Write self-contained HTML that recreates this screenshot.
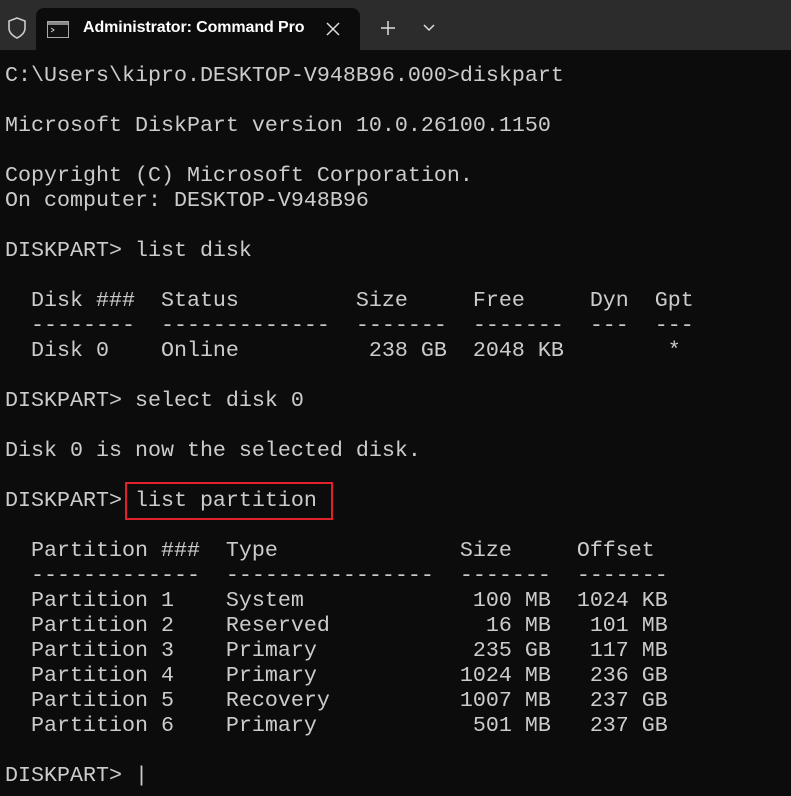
<!DOCTYPE html>
<html><head><meta charset="utf-8"><style>
html,body{margin:0;padding:0;width:791px;height:796px;overflow:hidden;background:#0c0c0c}
.bar{position:absolute;left:0;top:0;width:791px;height:50px;background:#2c2c2c}
.tab{position:absolute;left:36px;top:8px;width:324px;height:44px;background:#0c0c0c;border-radius:8px 8px 0 0}
.tt{position:absolute;left:83px;top:19px;font:16px "Liberation Sans",sans-serif;color:#fff;font-weight:bold;letter-spacing:-0.1px}
pre{position:absolute;left:5px;top:63px;margin:0;font:21.67px/25px "Liberation Mono",monospace;color:#cccccc}
.box{position:absolute;left:125px;top:482px;width:204px;height:34px;border:2px solid #e0202a}
</style></head><body>
<div class="bar"></div>
<svg style="position:absolute;left:6px;top:16px" width="22" height="24" viewBox="0 0 22 24"><path d="M11 2 L19 5 V12 C19 17 15 20 11 22 C7 20 3 17 3 12 V5 Z" fill="none" stroke="#ccc" stroke-width="1.6"/></svg>
<div class="tab"></div>
<svg style="position:absolute;left:47px;top:21px" width="22" height="17"><rect x="0.5" y="0.5" width="21" height="16" fill="#111" stroke="#aaa"/><rect x="1" y="1" width="20" height="3" fill="#888"/><path d="M4 7 L7 9 L4 11" stroke="#ccc" fill="none"/></svg>
<div class="tt">Administrator: Command Pro</div>
<svg style="position:absolute;left:326px;top:22px" width="14" height="14"><path d="M1 1L13 13M13 1L1 13" stroke="#ddd" stroke-width="1.5"/></svg>
<svg style="position:absolute;left:380px;top:20px" width="16" height="16"><path d="M8 1V15M1 8H15" stroke="#ddd" stroke-width="1.5"/></svg>
<svg style="position:absolute;left:423px;top:24px" width="12" height="8"><path d="M1 1L6 6L11 1" stroke="#ddd" stroke-width="1.5" fill="none"/></svg>
<pre>C:\Users\kipro.DESKTOP-V948B96.000>diskpart

Microsoft DiskPart version 10.0.26100.1150

Copyright (C) Microsoft Corporation.
On computer: DESKTOP-V948B96

DISKPART> list disk

  Disk ###  Status         Size     Free     Dyn  Gpt
  --------  -------------  -------  -------  ---  ---
  Disk 0    Online          238 GB  2048 KB        *

DISKPART> select disk 0

Disk 0 is now the selected disk.

DISKPART> list partition

  Partition ###  Type              Size     Offset
  -------------  ----------------  -------  -------
  Partition 1    System             100 MB  1024 KB
  Partition 2    Reserved            16 MB   101 MB
  Partition 3    Primary            235 GB   117 MB
  Partition 4    Primary           1024 MB   236 GB
  Partition 5    Recovery          1007 MB   237 GB
  Partition 6    Primary            501 MB   237 GB

DISKPART> |</pre>
<div class="box"></div>
</body></html>
